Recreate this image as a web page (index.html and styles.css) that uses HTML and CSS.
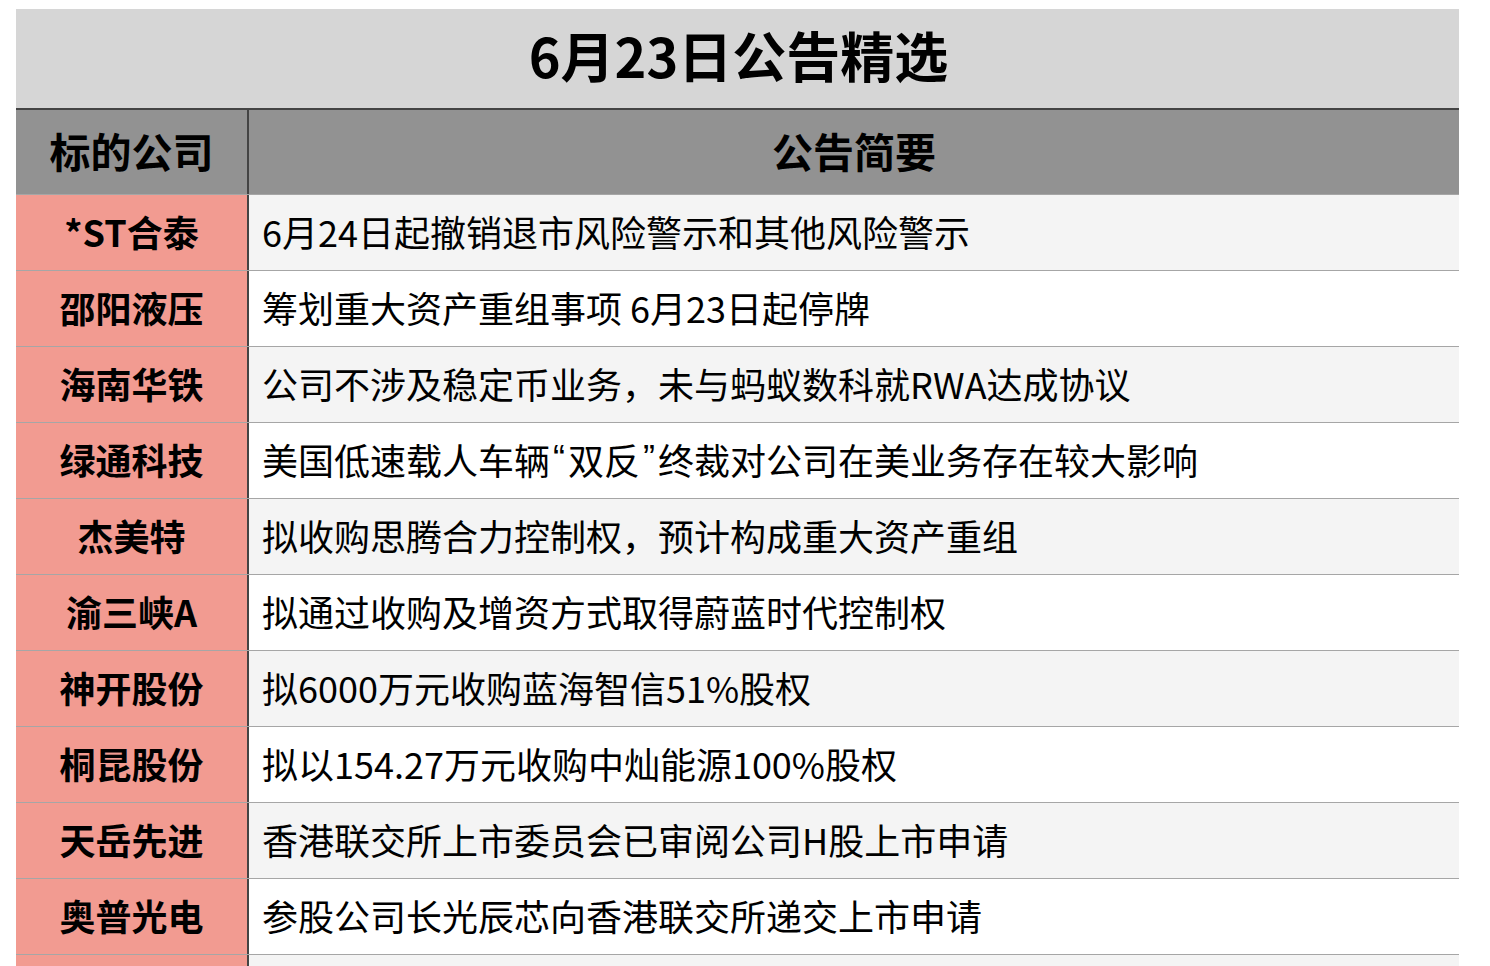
FILE: index.html
```html
<!DOCTYPE html>
<html lang="zh-CN">
<head>
<meta charset="utf-8">
<title>6月23日公告精选</title>
<link rel="stylesheet" href="styles.css">
</head>
<body>
<div class="sheet">
  <div class="title">6月23日公告精选</div>
  <div class="row head">
    <div class="name">标的公司</div>
    <div class="desc">公告简要</div>
  </div>
  <div class="row alt"><div class="name">*ST合泰</div><div class="desc">6月24日起撤销退市风险警示和其他风险警示</div></div>
  <div class="row"><div class="name">邵阳液压</div><div class="desc">筹划重大资产重组事项 6月23日起停牌</div></div>
  <div class="row alt"><div class="name">海南华铁</div><div class="desc">公司不涉及稳定币业务，未与蚂蚁数科就RWA达成协议</div></div>
  <div class="row"><div class="name">绿通科技</div><div class="desc">美国低速载人车辆<span class="q">“</span>双反<span class="q">”</span>终裁对公司在美业务存在较大影响</div></div>
  <div class="row alt"><div class="name">杰美特</div><div class="desc">拟收购思腾合力控制权，预计构成重大资产重组</div></div>
  <div class="row"><div class="name">渝三峡A</div><div class="desc">拟通过收购及增资方式取得蔚蓝时代控制权</div></div>
  <div class="row alt"><div class="name">神开股份</div><div class="desc">拟6000万元收购蓝海智信51%股权</div></div>
  <div class="row"><div class="name">桐昆股份</div><div class="desc">拟以154.27万元收购中灿能源100%股权</div></div>
  <div class="row alt"><div class="name">天岳先进</div><div class="desc">香港联交所上市委员会已审阅公司H股上市申请</div></div>
  <div class="row"><div class="name">奥普光电</div><div class="desc">参股公司长光辰芯向香港联交所递交上市申请</div></div>
  <div class="row alt"><div class="name"></div><div class="desc"></div></div>
</div>
</body>
</html>
```
FILE: styles.css
```css
html, body {
  margin: 0;
  padding: 0;
  background: #ffffff;
  overflow: hidden;
}
body {
  font-family: "Noto Sans CJK SC", "Noto Sans", sans-serif;
  color: #000;
}
.sheet {
  width: 1443px;
  height: 957px;
  overflow: hidden;
  margin: 9px 0 0 16px;
}
.title {
  height: 101px;
  box-sizing: border-box;
  background: #d6d6d6;
  border-bottom: 2px solid #444444;
  display: flex;
  align-items: center;
  justify-content: center;
  font-size: 54px;
  font-weight: 700;
  line-height: 1;
  padding: 0 0 8px 2px;
}
.row {
  display: grid;
  grid-template-columns: 233px 1fr;
  height: 76px;
  border-bottom: 1px solid #a6a6a6;
  box-sizing: border-box;
  background: #ffffff;
}
.row.alt {
  background: #f4f4f4;
}
.row.head {
  height: 85px;
  background: #929292;
}
.name {
  background: #f29b91;
  border-right: 2px solid #444444;
  display: flex;
  align-items: center;
  justify-content: center;
  font-size: 36px;
  font-weight: 700;
  line-height: 1;
  padding-bottom: 4px;
}
.desc {
  display: flex;
  align-items: center;
  padding: 0 0 4px 13px;
  font-size: 36px;
  font-weight: 400;
  line-height: 1;
  white-space: nowrap;
}
.q {
  font-family: "Liberation Sans", sans-serif;
  padding: 0 3px;
}
.head .name {
  background: #929292;
  font-size: 41px;
}
.head .desc {
  justify-content: center;
  padding-left: 0;
  font-size: 41px;
  font-weight: 700;
}
```
